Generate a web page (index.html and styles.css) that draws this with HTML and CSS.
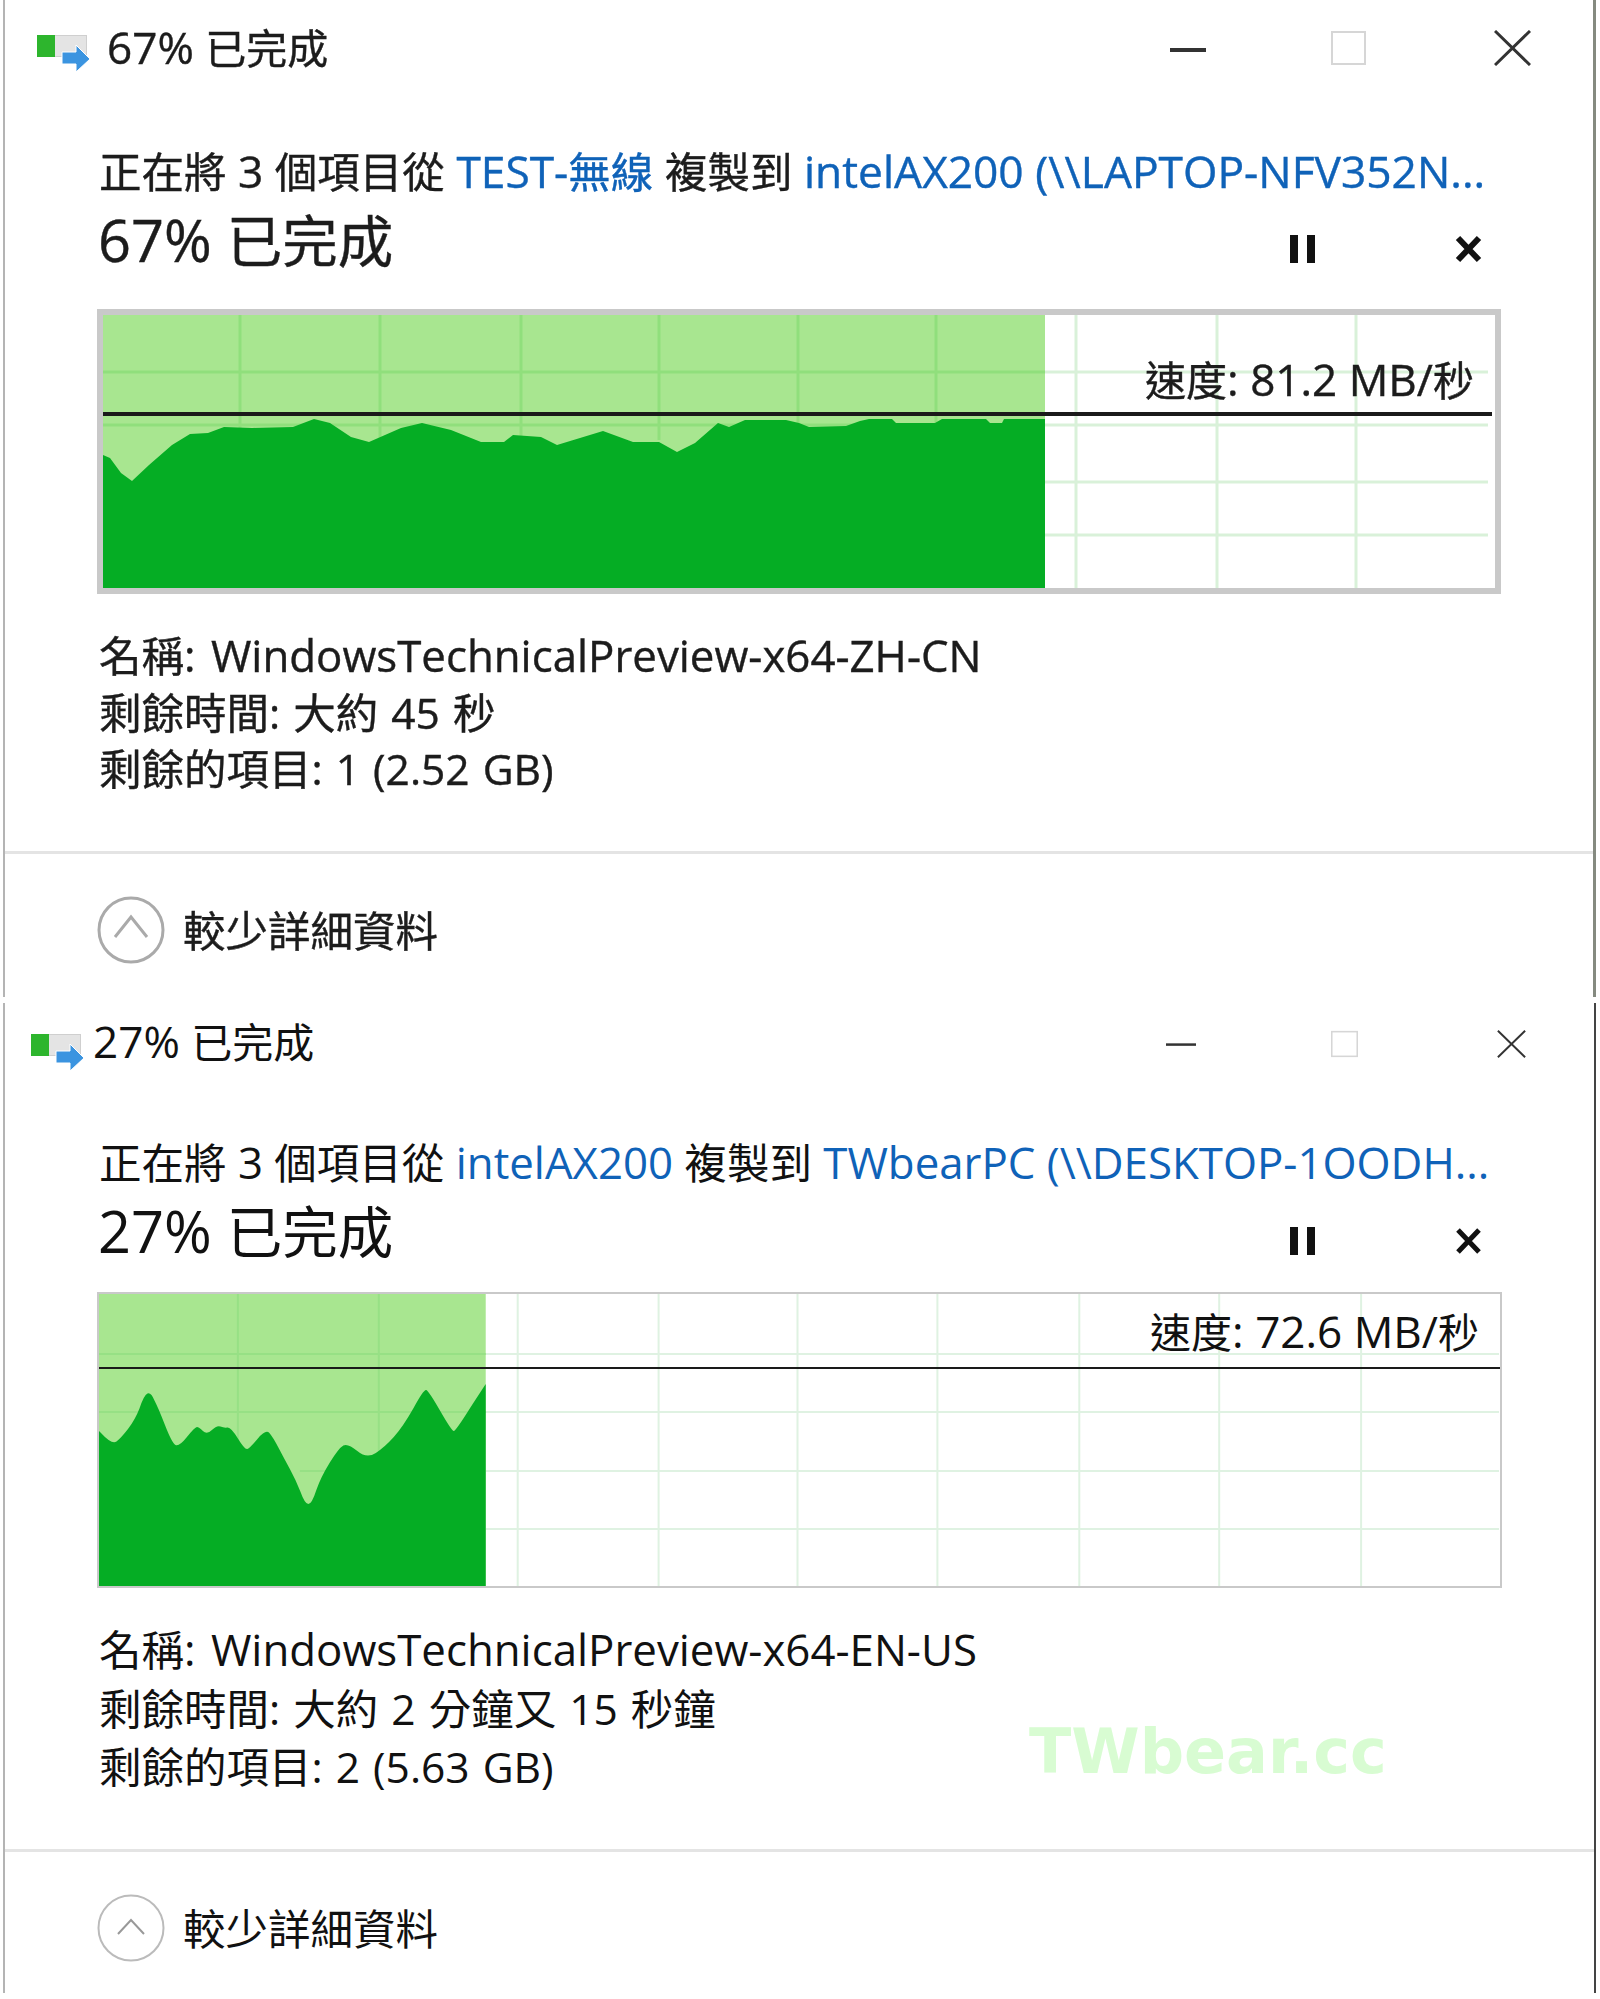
FILE: index.html
```html
<!DOCTYPE html>
<html lang="zh-Hant">
<head>
    <meta charset="UTF-8" />
    <title>複製進度</title>
    <link rel="stylesheet" href="styles.css">
</head>
<body>
    <!-- First dialog -->
    <section class="dialog dialog-first">
        <header class="title-bar">
            <svg class="copy-icon" viewBox="0 0 53 37"><rect x="0.5" y="0.5" width="49" height="21" fill="#e4e4e4" stroke="#cfcfcf"/><rect x="0" y="0" width="18" height="22" fill="#2db52d"/><path d="M25 17h14v-7l14 14-14 13v-8H25z" fill="#3b94e0" stroke="#fff"/></svg>
            <span class="title-text"><span class="la">67% </span>已完成</span>
            <div class="window-buttons">
                <svg class="win-min" viewBox="0 0 36 4"><rect width="36" height="4" fill="#333"/></svg>
                <svg class="win-max" viewBox="0 0 35 34"><rect x="1" y="1" width="33" height="32" fill="none" stroke="#d6d6d6" stroke-width="2"/></svg>
                <svg class="win-close" viewBox="0 0 37 36"><path d="M1 1l35 34M36 1L1 35" fill="none" stroke="#333" stroke-width="3"/></svg>
            </div>
        </header>

        <p class="copy-line">正在將<span class="la"> 3 </span>個項目從<span class="la"> </span><a href="#"><span class="la">TEST-</span>無線</a><span class="la"> </span>複製到<span class="la"> </span><a href="#" class="la">intelAX200 (\\LAPTOP-NFV352N...</a></p>

        <div class="status-row">
            <h2 class="status-text"><span class="la">67% </span>已完成</h2>
            <div class="status-actions">
                <svg class="act-pause" viewBox="0 0 27 28"><path d="M1 0h8v28H1zM18 0h8v28h-8z" fill="#111"/></svg>
                <svg class="act-stop" viewBox="0 0 27 28"><path d="M3 3l21 22M24 3L3 25" fill="none" stroke="#111" stroke-width="6"/></svg>
            </div>
        </div>

        <div class="chart">
            <svg class="chart-svg" viewBox="103 315 1392 273" preserveAspectRatio="none">
                <g class="grid-light">
                    <path d="M1076 315V588M1217 315V588M1356 315V588"/>
                    <path d="M1045 372H1488M1045 425H1488M1045 482H1488M1045 535H1488"/>
                </g>
                <rect class="area-light" x="103" y="315" width="942" height="273"/>
                <g class="grid-dark">
                    <path d="M240 315V440M380 315V440M521 315V440M659 315V440M798 315V430M936 315V430"/>
                    <path d="M103 372H1045M103 425H1045"/>
                </g>
                <polygon class="area-dark" points="103,588 103,455 110,458 121,473 132,481 149,465 172,445 190,434 208,433 224,427 252,428 293,427 314,419 330,423 351,437 369,442 401,428 422,423 451,430 481,442 504,442 513,435 541,437 557,445 580,438 603,431 633,442 659,442 677,452 695,443 718,423 729,427 745,420 786,420 799,423 809,427 846,426 860,421 869,419 892,419 896,423 935,423 942,419 986,419 990,423 1002,423 1004,419 1045,419 1045,588"/>
                <rect class="speed-line" x="103" y="412" width="1389" height="4"/>
            </svg>
            <span class="speed">速度<span class="la">: 81.2 MB/</span>秒</span>
        </div>

        <div class="details">
            <div>名稱<span class="la">: WindowsTechnicalPreview-x64-ZH-CN</span></div>
            <div>剩餘時間<span class="la">: </span>大約<span class="la"> 45 </span>秒</div>
            <div>剩餘的項目<span class="la">: 1 (2.52 GB)</span></div>
        </div>

        <footer class="more">
            <svg class="more-icon" viewBox="0 0 68 68"><circle cx="34" cy="34" r="32" fill="none" stroke="#aaa" stroke-width="3"/><path d="M18 41l16-20 16 20" fill="none" stroke="#aaa" stroke-width="3"/></svg>
            <span class="more-text">較少詳細資料</span>
        </footer>
    </section>

    <!-- Second dialog -->
    <section class="dialog dialog-second">
        <header class="title-bar">
            <svg class="copy-icon" viewBox="0 0 53 37"><rect x="0.5" y="0.5" width="49" height="21" fill="#e4e4e4" stroke="#cfcfcf"/><rect x="0" y="0" width="18" height="22" fill="#2db52d"/><path d="M25 17h14v-7l14 14-14 13v-8H25z" fill="#3b94e0" stroke="#fff"/></svg>
            <span class="title-text"><span class="la">27% </span>已完成</span>
            <div class="window-buttons">
                <svg class="win-min" viewBox="0 0 36 4"><rect width="36" height="3" fill="#333"/></svg>
                <svg class="win-max" viewBox="0 0 35 34"><rect x="1" y="1" width="33" height="32" fill="none" stroke="#d6d6d6" stroke-width="2"/></svg>
                <svg class="win-close" viewBox="0 0 37 36"><path d="M1 1l35 34M36 1L1 35" fill="none" stroke="#333" stroke-width="2.5"/></svg>
            </div>
        </header>

        <p class="copy-line">正在將<span class="la"> 3 </span>個項目從<span class="la"> </span><a href="#" class="la">intelAX200</a><span class="la"> </span>複製到<span class="la"> </span><a href="#" class="la">TWbearPC (\\DESKTOP-1OODH...</a></p>

        <div class="status-row">
            <h2 class="status-text"><span class="la">27% </span>已完成</h2>
            <div class="status-actions">
                <svg class="act-pause" viewBox="0 0 27 28"><path d="M1 0h8v28H1zM18 0h8v28h-8z" fill="#111"/></svg>
                <svg class="act-stop" viewBox="0 0 27 28"><path d="M3 3l21 22M24 3L3 25" fill="none" stroke="#111" stroke-width="5"/></svg>
            </div>
        </div>

        <div class="chart">
            <svg class="chart-svg" viewBox="99 1294 1402 292" preserveAspectRatio="none">
                <g class="grid-light">
                    <path d="M518 1294V1586M659 1294V1586M798 1294V1586M938 1294V1586M1080 1294V1586M1220 1294V1586M1362 1294V1586"/>
                    <path d="M486 1354H1500M486 1412H1500M486 1471H1500M486 1529H1500"/>
                </g>
                <rect class="area-light" x="99" y="1294" width="387" height="292"/>
                <g class="grid-dark">
                    <path d="M238 1294V1440M379 1294V1460"/>
                    <path d="M99 1354H486M99 1412H486M300 1471H340"/>
                </g>
                <path class="area-dark" d="M99 1586V1431L101 1433Q112 1445 116.5 1441.5Q121 1438 128 1429Q135 1420 139.5 1408.5Q144 1395 147.5 1393.5Q151 1392 154.5 1400.5Q158 1407 165 1425Q172 1443 175.5 1445Q179 1447 187 1437Q195 1427 197 1427Q199 1427 203 1431Q207 1435 212 1430Q217 1425 220.5 1426.5Q224 1428 227.5 1427.5Q231 1427 238 1438.5Q245 1450 247.5 1449Q250 1448 258 1438.5Q266 1429 269.5 1433Q273 1437 278.5 1447.5Q284 1458 290 1469Q296 1480 300.5 1491.5Q305 1504 308.5 1504Q312 1504 316.5 1490Q321 1477 330 1462.5Q339 1448 343.5 1445.5Q348 1443 357.5 1451Q367 1459 376 1453Q385 1447 394 1437Q403 1427 413.5 1408.5Q424 1389 426.5 1390Q429 1391 440.5 1411Q452 1431 454 1431Q456 1431 471 1407L486 1384V1586Z"/>
                <rect class="speed-line" x="99" y="1367" width="1402" height="2"/>
            </svg>
            <span class="speed">速度<span class="la">: 72.6 MB/</span>秒</span>
        </div>

        <div class="details">
            <div>名稱<span class="la">: WindowsTechnicalPreview-x64-EN-US</span></div>
            <div>剩餘時間<span class="la">: </span>大約<span class="la"> 2 </span>分鐘又<span class="la"> 15 </span>秒鐘</div>
            <div>剩餘的項目<span class="la">: 2 (5.63 GB)</span></div>
        </div>
        <div class="watermark">TWbear.cc</div>

        <footer class="more">
            <svg class="more-icon" viewBox="0 0 68 68"><circle cx="34" cy="34" r="32.5" fill="none" stroke="#bbb" stroke-width="2"/><path d="M21 40l13-14 13 14" fill="none" stroke="#999" stroke-width="2"/></svg>
            <span class="more-text">較少詳細資料</span>
        </footer>
    </section>
</body>
</html>
```

FILE: styles.css
```css
* {
    box-sizing: border-box;
    margin: 0;
    padding: 0;
}

body {
    background: #fff;
    color: #1c1c1c;
    font-family: "Noto Sans CJK TC", "Open Sans", sans-serif;
    font-size: 41px;
    width: 1600px;
    height: 1999px;
    overflow: hidden;
}

a {
    color: #0f62b8;
    text-decoration: none;
}

/* Latin text runs are a bit larger than the CJK ones */
.la {
    font-family: "Open Sans", sans-serif;
    font-size: 1.075em;
    line-height: 0;
}

/* Dialog frame */
.dialog {
    position: relative;
    margin-left: 3px;
    margin-right: 4px;
    border-left: 2px solid #b4b4b4;
    padding-left: 94px;
    white-space: nowrap;
}

.dialog-first {
    height: 997px;
    border-right: 3px solid #858a80;
    filter: blur(0.6px);
    -webkit-text-stroke: 0.4px #1c1c1c;
}

.dialog-first a {
    -webkit-text-stroke-color: #0f62b8;
}

.dialog-second {
    height: 990px;
    margin-top: 6px;
    border-right: 2px solid #444;
    color: #111;
}

/* Title bar */
.title-bar {
    display: flex;
    align-items: center;
    margin-left: -94px;
    height: 96px;
}

.dialog-first .title-bar {
    padding-left: 32px;
}

.dialog-second .title-bar {
    height: 81px;
    padding-left: 26px;
}

.copy-icon {
    width: 53px;
    height: 37px;
    margin-top: 11px;
    flex: none;
}

.dialog-second .copy-icon {
    margin-top: 17px;
}

.title-text {
    line-height: 50px;
    margin-left: 17px;
    margin-bottom: 5px;
}

.dialog-second .title-text {
    margin-left: 9px;
    margin-bottom: 8px;
}

.window-buttons {
    display: flex;
    align-items: center;
    margin-left: auto;
}

.win-min {
    width: 36px;
    height: 4px;
    margin-top: 4px;
}

.win-max {
    width: 35px;
    height: 34px;
    margin-left: 125px;
}

.win-close {
    width: 37px;
    height: 36px;
    margin-left: 128px;
    margin-right: 62px;
}

.dialog-second .win-min {
    width: 30px;
    margin-left: 0;
    margin-top: 2px;
}

.dialog-second .win-max {
    width: 27px;
    height: 28px;
    margin-left: 135px;
}

.dialog-second .win-close {
    width: 29px;
    height: 28px;
    margin-left: 139px;
    margin-right: 68px;
}

/* Copy description */
.copy-line {
    font-size: 42.5px;
    line-height: 44px;
    margin-top: 52px;
}

.dialog-second .copy-line {
    margin-top: 55px;
}

.copy-line .la {
    font-size: 44.3px;
}

.dialog-second .copy-line .la {
    font-size: 43.8px;
}

.status-row {
    display: flex;
    align-items: center;
    justify-content: space-between;
    width: 1383px;
    height: 64px;
    margin-top: 14px;
}

.dialog-second .status-row {
    margin-top: 14px;
}

.status-text {
    font-size: 55.5px;
    font-weight: 400;
    line-height: 64px;
    margin-left: -1px;
}

.status-text .la {
    font-size: 1.04em;
}

.status-actions {
    display: flex;
    align-items: center;
    gap: 139px;
    margin-top: 22px;
}

.dialog-second .status-actions {
    margin-top: 24px;
}

.act-pause,
.act-stop {
    width: 27px;
    height: 28px;
}

/* Speed chart */
.chart {
    position: relative;
    width: 1404px;
    height: 285px;
    margin-top: 39px;
    margin-left: -2px;
    border: 6px solid #c9c9c9;
}

.dialog-second .chart {
    width: 1405px;
    height: 296px;
    margin-top: 31px;
    border-width: 2px;
}

.chart-svg {
    display: block;
    width: 100%;
    height: 100%;
}

.grid-light path {
    fill: none;
    stroke: #d9f1d9;
    stroke-width: 3;
}

.dialog-second .grid-light path {
    stroke: #dff2e2;
    stroke-width: 2;
}

.grid-dark path {
    fill: none;
    stroke: #90df7c;
    stroke-width: 3;
}

.dialog-second .grid-dark path {
    stroke: #97e085;
    stroke-width: 2;
}

.area-light {
    fill: #a8e690;
}

.area-dark {
    fill: #05ad24;
}

.speed-line {
    fill: #1a1a1a;
}

.speed {
    position: absolute;
    top: 41px;
    right: 21px;
    line-height: 44px;
}

.dialog-second .speed {
    top: 14px;
    right: 21px;
}

/* Details */
.details {
    font-size: 42.5px;
    line-height: 56.5px;
    margin-top: 32px;
}

.dialog-second .details {
    line-height: 58.5px;
    margin-top: 31px;
}

.details div:first-child .la {
    font-size: 43.8px;
    word-spacing: 4px;
}

.details div + div .la {
    font-size: 42.5px;
    word-spacing: 2px;
}

.more {
    display: flex;
    align-items: center;
    gap: 18px;
    height: 146px;
    margin-top: 55px;
    margin-left: -94px;
    padding-top: 10px;
    padding-left: 92px;
    border-top: 3px solid #e4e4e4;
    font-size: 42.5px;
}

.dialog-second .more {
    margin-top: 54px;
}

.more-icon {
    width: 68px;
    height: 68px;
}

.more-text {
    margin-bottom: 4px;
}

.watermark {
    position: absolute;
    top: 712px;
    left: 1024px;
    font-family: "DejaVu Sans", sans-serif;
    font-size: 62px;
    font-weight: 700;
    color: #d8fcd2;
}
```
